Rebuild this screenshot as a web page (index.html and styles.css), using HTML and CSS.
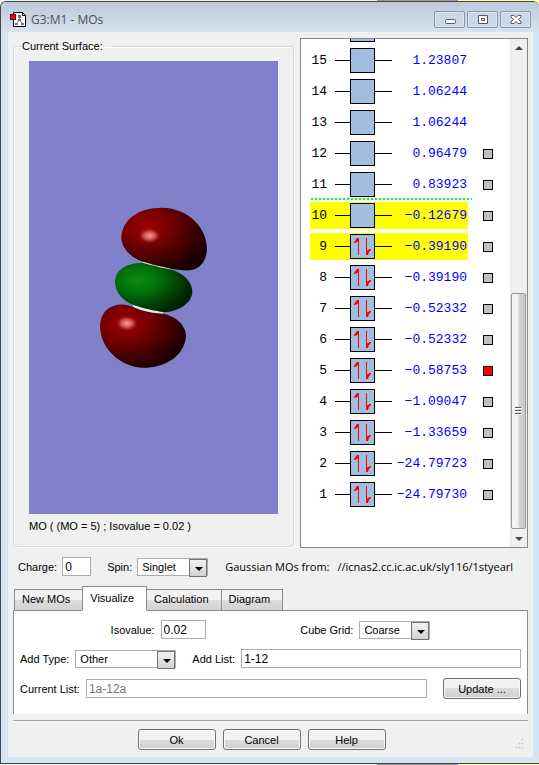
FILE: index.html
```
<!DOCTYPE html>
<html lang="en">
<head>
    <meta charset="UTF-8">
    <meta name="viewport" content="width=device-width, initial-scale=1.0">
    <title>G3:M1 - MOs</title>
    <link rel="stylesheet" href="styles.css">
</head>
<body>
    <div class="window">
        <header class="title-bar">
            <svg class="app-icon" width="17" height="17" viewBox="0 0 17 17">
                <path d="M3.500 1.500H12.500L15.500 4.500V15.500H3.500Z" fill="#fff" stroke="#000"/>
                <path d="M12.500 1.500V4.500H15.500" fill="none" stroke="#000"/>
                <path d="M9.500 5V9L6 13M9.500 9L13 13" fill="none" stroke="#777"/>
                <path d="M8 4h3v3H8zM8 8h3v2H8zM5 12h3v2H5zM11 12h3v2h-3z" fill="#777"/>
                <rect x=".5" y="3.500" width="5" height="5" fill="#f00" stroke="#500"/>
            </svg>
            <h1>G3:M1 - MOs</h1>
            <div class="window-buttons">
                <button type="button" aria-label="Minimize">
                    <svg width="12" height="12" viewBox="0 0 12 12"><rect x="1.500" y="5.500" width="10" height="4" rx="1" fill="#fff" stroke="#555b66"/></svg>
                </button>
                <button type="button" aria-label="Maximize">
                    <svg width="12" height="12" viewBox="0 0 12 12"><path d="M1.500 1.500h9v8h-9zM4.500 4.500h3v2h-3z" fill="#fff" fill-rule="evenodd" stroke="#555b66"/></svg>
                </button>
                <button type="button" aria-label="Close">
                    <svg width="12" height="12" viewBox="0 0 12 12"><path d="M1 1.500H4L6 3.500L8 1.500H11V3L8.500 5.500L11 8V9.500H8L6 7.500L4 9.500H1V8L3.500 5.500L1 3Z" fill="#fff" stroke="#555b66"/></svg>
                </button>
            </div>
        </header>

        <main class="content">
            <div class="viewer">
                <fieldset class="surface">
                    <legend>Current Surface:</legend>
                    <svg class="surface-view" viewBox="-183 -387 750 1356" role="img" aria-label="Molecular orbital surface">
                        <defs>
                            <radialGradient id="red" cx=".3" cy=".3" r=".75">
                                <stop offset="0" stop-color="#9a0000"/>
                                <stop offset=".35" stop-color="#780000"/>
                                <stop offset=".7" stop-color="#430000"/>
                                <stop offset="1" stop-color="#1c0000"/>
                            </radialGradient>
                            <radialGradient id="green" cx=".3" cy=".35" r=".7">
                                <stop offset="0" stop-color="#0a8c12"/>
                                <stop offset=".4" stop-color="#006e08"/>
                                <stop offset=".75" stop-color="#004004"/>
                                <stop offset="1" stop-color="#002402"/>
                            </radialGradient>
                            <radialGradient id="shine">
                                <stop offset="0" stop-color="#ff9c9c"/>
                                <stop offset=".5" stop-color="#e06464" stop-opacity=".8"/>
                                <stop offset="1" stop-color="#a01010" stop-opacity="0"/>
                            </radialGradient>
                        </defs>
                        <path d="M160 213L200 220L246 236L240 242L200 236L160 220ZM130 344L170 352L222 366L216 374L170 366L132 352Z" fill="#d4f4f4"/>
                        <path d="M95 142C98 84 150 50 218 51C298 52 353 112 353 176C351 222 322 240 292 240C250 238 200 226 158 213C122 200 97 172 95 142Z" fill="url(#red)"/>
                        <path d="M76 272C78 232 120 215 162 217C200 227 220 232 245 237C280 248 309 272 309 304C307 342 262 366 222 365C190 361 165 355 132 344C100 330 76 308 76 272Z" fill="url(#green)"/>
                        <path d="M31 410C32 364 60 342 98 342C124 343 136 354 160 360C180 366 200 368 220 370C262 378 290 406 290 438C284 502 222 533 162 533C90 530 33 474 31 410Z" fill="url(#red)"/>
                        <ellipse cx="180" cy="135" rx="35" ry="24" fill="url(#shine)"/>
                        <ellipse cx="112" cy="399" rx="35" ry="24" fill="url(#shine)"/>
                    </svg>
                    <p class="caption">MO ( (MO = 5) ; Isovalue = 0.02 )</p>
                </fieldset>

                <section class="orbitals" aria-label="Molecular orbitals">
                    <svg class="symbols" width="0" height="0">
                        <symbol id="empty" viewBox="0 0 57 27">
                            <path d="M0 13.500H57" stroke="#000"/>
                            <rect x="15.500" y="1.500" width="24" height="24" fill="#a0bedf" stroke="#000"/>
                        </symbol>
                        <symbol id="filled" viewBox="0 0 57 27">
                            <use href="#empty" width="57" height="27"/>
                            <path d="M23.500 22V5.500M31.500 5V21.500" fill="none" stroke="#f00"/>
                            <path d="M24 5H22L19 9V10H20L24 8ZM31 22H33L34 19L36 17V16H35L31 18Z" fill="#f00"/>
                        </symbol>
                    </svg>
                    <div class="orbital-list">
                        <table>
                            <tbody>
                                <tr><td></td><td><svg class="level"><use href="#empty"/></svg></td><td></td><td></td></tr>
                                <tr><td>15</td><td><svg class="level"><use href="#empty"/></svg></td><td>1.23807</td><td></td></tr>
                                <tr><td>14</td><td><svg class="level"><use href="#empty"/></svg></td><td>1.06244</td><td></td></tr>
                                <tr><td>13</td><td><svg class="level"><use href="#empty"/></svg></td><td>1.06244</td><td></td></tr>
                                <tr><td>12</td><td><svg class="level"><use href="#empty"/></svg></td><td>0.96479</td><td><input type="checkbox" aria-label="Show MO 12"></td></tr>
                                <tr class="gap-line"><td>11</td><td><svg class="level"><use href="#empty"/></svg></td><td>0.83923</td><td><input type="checkbox" aria-label="Show MO 11"></td></tr>
                                <tr class="selected"><td>10</td><td><svg class="level"><use href="#empty"/></svg></td><td>−0.12679</td><td><input type="checkbox" aria-label="Show MO 10"></td></tr>
                                <tr class="selected"><td>9</td><td><svg class="level"><use href="#filled"/></svg></td><td>−0.39190</td><td><input type="checkbox" aria-label="Show MO 9"></td></tr>
                                <tr><td>8</td><td><svg class="level"><use href="#filled"/></svg></td><td>−0.39190</td><td><input type="checkbox" aria-label="Show MO 8"></td></tr>
                                <tr><td>7</td><td><svg class="level"><use href="#filled"/></svg></td><td>−0.52332</td><td><input type="checkbox" aria-label="Show MO 7"></td></tr>
                                <tr><td>6</td><td><svg class="level"><use href="#filled"/></svg></td><td>−0.52332</td><td><input type="checkbox" aria-label="Show MO 6"></td></tr>
                                <tr><td>5</td><td><svg class="level"><use href="#filled"/></svg></td><td>−0.58753</td><td><input type="checkbox" aria-label="Show MO 5" checked></td></tr>
                                <tr><td>4</td><td><svg class="level"><use href="#filled"/></svg></td><td>−1.09047</td><td><input type="checkbox" aria-label="Show MO 4"></td></tr>
                                <tr><td>3</td><td><svg class="level"><use href="#filled"/></svg></td><td>−1.33659</td><td><input type="checkbox" aria-label="Show MO 3"></td></tr>
                                <tr><td>2</td><td><svg class="level"><use href="#filled"/></svg></td><td>−24.79723</td><td><input type="checkbox" aria-label="Show MO 2"></td></tr>
                                <tr><td>1</td><td><svg class="level"><use href="#filled"/></svg></td><td>−24.79730</td><td><input type="checkbox" aria-label="Show MO 1"></td></tr>
                            </tbody>
                        </table>
                    </div>
                    <div class="scrollbar">
                        <svg width="8" height="17" viewBox="0 0 8 17"><path d="M0 11L4 7L8 11Z" fill="#444"/></svg>
                        <div class="track">
                            <div class="thumb">
                                <svg width="7" height="8" viewBox="0 0 7 8"><path d="M0 .5H6M0 3.500H6M0 6.500H6" stroke="#555"/><path d="M1 1.500H7M1 4.500H7M1 7.500H7" stroke="#fff"/></svg>
                            </div>
                        </div>
                        <svg width="8" height="18" viewBox="0 0 8 18"><path d="M0 8L4 12L8 8Z" fill="#444"/></svg>
                    </div>
                </section>
            </div>

            <div class="row molecule">
                <label for="charge">Charge:</label>
                <input type="text" id="charge" class="charge" value="0">
                <label for="spin" class="spin-label">Spin:</label>
                <span class="select small">
                    <select id="spin"><option>Singlet</option></select>
                </span>
                <p class="source"><span>Gaussian MOs from:</span><span>//icnas2.cc.ic.ac.uk/sly116/1styearl</span></p>
            </div>

            <div class="tabs" role="tablist">
                <button type="button" role="tab">New MOs</button>
                <button type="button" role="tab" class="active" aria-selected="true">Visualize</button>
                <button type="button" role="tab">Calculation</button>
                <button type="button" role="tab">Diagram</button>
            </div>

            <div class="tab-panel" role="tabpanel">
                <div class="row spread">
                    <div class="field">
                        <label for="isovalue">Isovalue:</label>
                        <input type="text" id="isovalue" class="isovalue" value="0.02">
                    </div>
                    <div class="field">
                        <label for="grid">Cube Grid:</label>
                        <span class="select small">
                            <select id="grid"><option>Coarse</option></select>
                        </span>
                    </div>
                </div>
                <div class="row">
                    <div class="field">
                        <label for="type">Add Type:</label>
                        <span class="select medium">
                            <select id="type"><option>Other</option></select>
                        </span>
                    </div>
                    <div class="field grow">
                        <label for="add">Add List:</label>
                        <input type="text" id="add" value="1-12">
                    </div>
                </div>
                <div class="row">
                    <div class="field grow">
                        <label for="current">Current List:</label>
                        <input type="text" id="current" value="1a-12a" readonly>
                    </div>
                    <button type="button" class="button">Update ...</button>
                </div>
            </div>

            <footer class="footer">
                <div class="actions">
                    <button type="button" class="button">Ok</button>
                    <button type="button" class="button">Cancel</button>
                    <button type="button" class="button">Help</button>
                </div>
                <svg class="grip" width="12" height="12" viewBox="0 0 12 12"><path d="M8 1h1v1H8zM5 5h1v1H5zM8 5h1v1H8zM2 9h1v1H2zM5 9h1v1H5zM8 9h1v1H8z" fill="#aaa" stroke="#ccc" stroke-width=".5"/></svg>
            </footer>
        </main>
    </div>
</body>
</html>
```
FILE: styles.css
```
* {
    box-sizing: border-box;
}

body {
    margin: 0;
    height: 100vh;
    min-height: 700px;
    padding: 1px 0;
    background: linear-gradient(90deg, #eef3ec 70%, #999 70%, #999 85%, #ffffa8 85%);
    font-family: "Liberation Sans", Arial, sans-serif;
    font-size: 11px;
    line-height: 16px;
    color: #000;
}

button, input, select {
    font: inherit;
    color: inherit;
}

p, h1 {
    margin: 0;
}

.window {
    display: flex;
    flex-direction: column;
    height: 100%;
    padding: 0 6px 6px;
    background: #d7e4f2;
    border: 1px solid #46464a;
    border-right-width: 0;
    border-radius: 6px 6px 0 0;
}

/* title bar */
.title-bar {
    display: flex;
    align-items: center;
    gap: 4px;
    height: 30px;
    margin: 0 -6px;
    padding: 5px 8px 0 9px;
    background: linear-gradient(#bccad9, #d5e2f0);
    border-radius: 5px 5px 0 0;
}

.title-bar h1 {
    flex: 1;
    font-family: "Open Sans", "Noto Sans", sans-serif;
    font-size: 12px;
    font-weight: 400;
    color: #4b5058;
}

.window-buttons {
    display: flex;
    gap: 2px;
}

.window-buttons button {
    display: flex;
    align-items: center;
    justify-content: center;
    width: 31px;
    height: 17px;
    padding: 0;
    background: #c9d7e6;
    border: 1px solid #8796ad;
    border-radius: 2px;
    box-shadow: inset 0 0 0 1px #dce7f2;
}

.content {
    flex: 1;
    display: flex;
    flex-direction: column;
    min-height: 0;
    margin-left: 1px;
    padding: 6px 5px 0;
    background: #f0f0f0;
}

/* surface and orbital list */
.viewer {
    flex: 1;
    display: grid;
    grid-template-columns: 281fr 228fr;
    grid-template-rows: minmax(0, 1fr);
    gap: 6px;
    min-height: 0;
}

.surface {
    display: flex;
    flex-direction: column;
    min-width: 0;
    margin: 0 0 1px;
    padding: 7px 15px 12px;
    border: 1px solid #d0dce5;
    border-radius: 3px;
    box-shadow: inset 1px 1px #fff, 1px 1px #fff;
}

.surface legend {
    margin-left: -8px;
    padding: 0 8px 0 1px;
}

.surface-view {
    flex: 1;
    width: 100%;
    min-height: 0;
    background: #8080cb;
}

.caption {
    margin-top: 4px;
}

.orbitals {
    display: flex;
    min-width: 0;
    background: #fff;
    border: 1px solid #828790;
}

.symbols {
    position: absolute;
}

.orbital-list {
    flex: 1;
    display: flex;
    flex-direction: column;
    justify-content: flex-end;
    overflow: hidden;
    padding: 0 0 35px 9px;
}

.orbital-list table {
    width: 184px;
    table-layout: fixed;
    border-spacing: 0 4px;
    font-family: "Liberation Mono", "Courier New", monospace;
    font-size: 13px;
}

.orbital-list td {
    height: 27px;
    padding: 0;
    text-align: right;
}

.orbital-list td:nth-child(1) {
    position: relative;
    width: 25px;
    padding-right: 8px;
}

.orbital-list td:nth-child(2) {
    width: 57px;
}

.orbital-list td:nth-child(3) {
    width: 76px;
    padding-right: 1px;
    color: #00f;
}

.level {
    display: block;
    width: 57px;
    height: 27px;
}

.selected td:not(:last-child) {
    background: #ff0;
}

/* HOMO / LUMO divider */
.gap-line td:first-child::after {
    content: "";
    position: absolute;
    left: 1px;
    bottom: -2px;
    width: 161px;
    height: 2px;
    background: repeating-linear-gradient(90deg, #0f0 0 2px, #fff 2px 4px);
}

.orbital-list input {
    appearance: none;
    display: block;
    width: 10px;
    height: 10px;
    margin: 0 1px 0 auto;
    background: #c0c0c0;
    border: 1px solid #000;
}

.orbital-list input:checked {
    background: #f00;
}

.scrollbar {
    display: flex;
    flex-direction: column;
    align-items: center;
    width: 17px;
    background: #f0f0f0;
    border-left: 1px solid #e6e6e6;
}

.track {
    flex: 1;
    display: flex;
    align-items: flex-end;
    width: 100%;
}

.thumb {
    display: flex;
    align-items: center;
    justify-content: center;
    width: 15px;
    height: 50%;
    background: linear-gradient(90deg, #f4f4f4 40%, #d0d0d3 60%, #c8c8ca);
    border: 1px solid #979797;
    border-radius: 2px;
}

/* form controls */
.row, .field {
    display: flex;
    align-items: center;
    gap: 6px;
}

.row {
    gap: 16px;
}

.grow {
    flex: 1;
}

input[type="text"] {
    height: 19px;
    padding: 0 2px;
    background: #fff;
    border: 1px solid #abadb3;
    font-size: 12px;
}

.grow input {
    flex: 1;
    min-width: 0;
}

input[readonly] {
    color: #777;
}

.field label {
    white-space: nowrap;
}

.select {
    position: relative;
    display: block;
    height: 18px;
}

.select select {
    appearance: none;
    display: block;
    width: 100%;
    height: 100%;
    padding: 0 20px 2px 4px;
    background: #fff;
    border: 1px solid #abadb3;
    border-radius: 0;
}

.select::before {
    content: "";
    position: absolute;
    top: 1px;
    right: 1px;
    width: 16px;
    height: 16px;
    background: linear-gradient(#f2f2f2, #d2d2d2);
    border: 1px solid #707070;
    pointer-events: none;
}

.select::after {
    content: "";
    position: absolute;
    top: 9px;
    right: 5px;
    border: 4px solid transparent;
    border-top-color: #000;
    border-bottom: 0;
    pointer-events: none;
}

.small {
    width: 71px;
}

.medium {
    width: 101px;
}

.molecule {
    gap: 5px;
    padding: 9px 6px 10px 5px;
}

.charge {
    width: 29px;
}

.spin-label {
    margin-left: 11px;
}

.isovalue {
    width: 45px;
}

.source {
    flex: 1;
    display: flex;
    gap: 8px;
    margin-left: 12px;
    overflow: hidden;
    white-space: nowrap;
    font-family: "Open Sans", "Noto Sans", sans-serif;
}

/* tabs */
.tabs {
    display: flex;
    align-items: flex-end;
    height: 25px;
    margin-bottom: -1px;
    padding-left: 1px;
}

.tabs button {
    height: 22px;
    padding: 0 12px 2px 7px;
    background: linear-gradient(#f2f2f2 50%, #dddddd 50%, #d2d2d2);
    border: 1px solid #898c95;
    margin-right: -1px;
}

.tabs .active {
    z-index: 1;
    height: 25px;
    background: #fff;
    border-bottom-color: #fff;
}

.tab-panel {
    display: flex;
    flex-direction: column;
    gap: 10px;
    padding: 9px 6px 15px;
    background: #fff;
    border: 1px solid #898c95;
    border-bottom: 0;
}

.spread {
    gap: 4px;
    justify-content: space-evenly;
}

.button {
    width: 78px;
    height: 21px;
    padding: 0;
    background: linear-gradient(#f2f2f2 50%, #dddddd 50%, #cfcfcf);
    border: 1px solid #707070;
    border-radius: 3px;
    box-shadow: inset 0 0 0 1px #fafafa;
}

/* footer */
.footer {
    display: flex;
    align-items: flex-end;
    margin-top: 6px;
    padding: 8px 2px 7px 0;
    border-top: 1px solid #a0a0a0;
    box-shadow: inset 0 1px #fff;
}

.actions {
    flex: 1;
    display: flex;
    justify-content: center;
    gap: 7px;
    padding-right: 4px;
}
```
